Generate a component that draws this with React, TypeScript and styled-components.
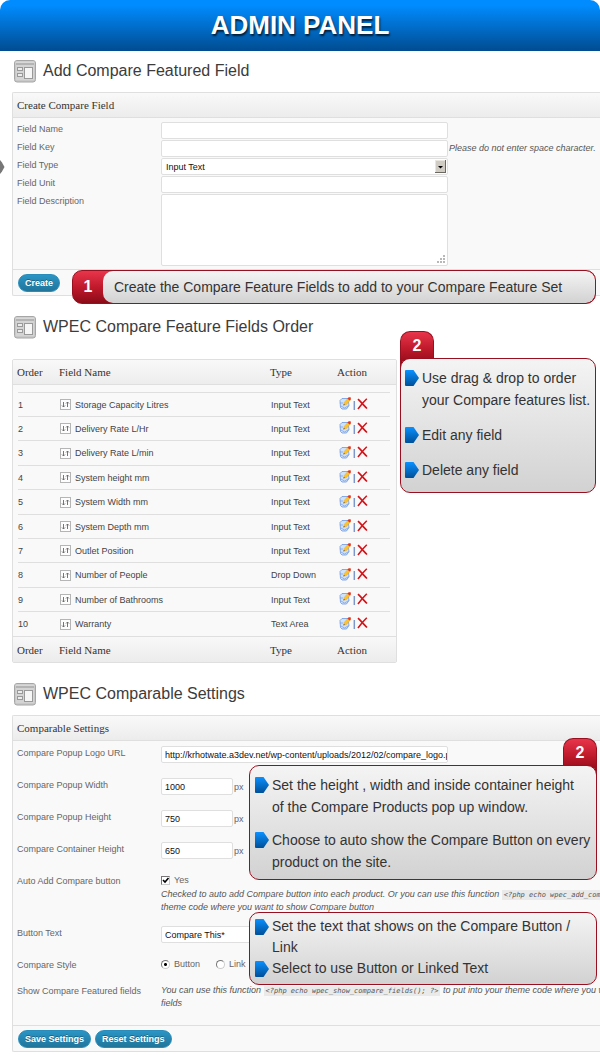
import React from "react";
import styled, { createGlobalStyle } from "styled-components";

const GlobalStyle = createGlobalStyle`
  *, *::before, *::after { box-sizing: border-box; }
  body {
    margin: 0;
    background: #fff;
    color: #333;
    font: 9px/12px "Liberation Sans", Arial, sans-serif;
    overflow-x: hidden;
  }
`;

const Banner = styled.header`
  display: flex;
  align-items: center;
  justify-content: center;
  height: 51px;
  padding-bottom: 2px;
  border-radius: 10px 10px 0 0;
  background: linear-gradient(#008cff 10%, #004c90);
`;

const BannerTitle = styled.h1`
  margin: 0;
  color: #fff;
  font-size: 26px;
  line-height: 30px;
  text-shadow: 1px 2px 2px rgba(0, 0, 0, 0.7);
`;

const Section = styled.section<{ $gap?: number }>`
  position: relative;
  padding: ${(p) => p.$gap ?? 9}px 0 0 12px;
`;

const SectionHead = styled.div<{ $space: number }>`
  display: flex;
  gap: 7px;
  padding-left: 2px;
  margin-bottom: ${(p) => p.$space}px;
`;

const SectionTitle = styled.h2`
  margin: 0;
  color: #3c3c3c;
  font-size: 16px;
  font-weight: normal;
  line-height: 21px;
`;

const Panel = styled.div`
  border: 1px solid #dfdfdf;
  border-right: 0;
  border-radius: 2px 0 0 2px;
  background: #f9f9f9;
  overflow: hidden;
`;

const PanelHead = styled.h3`
  margin: 0;
  padding: 0 4px;
  height: 25px;
  border-bottom: 1px solid #dfdfdf;
  background: linear-gradient(#f9f9f9, #ececec);
  font: 11px/24px "Liberation Serif", "Times New Roman", serif;
`;

const PanelFoot = styled.div`
  display: flex;
  gap: 4px;
  padding: 4px 5px 3px;
  border-top: 1px solid #dfdfdf;
`;

const Fields = styled.div<{ $pad: string }>`
  padding: ${(p) => p.$pad};
`;

const Row = styled.div<{ $height: number }>`
  display: grid;
  grid-template-columns: 144px minmax(0, 1fr);
  align-items: start;
  min-height: ${(p) => p.$height}px;
  color: #666;
`;

const Caption = styled.label`
  padding-top: 1px;
`;

const Control = styled.div`
  display: flex;
  align-items: center;
  gap: 1px;
`;

const Options = styled.div`
  display: flex;
  gap: 16px;
`;

const fieldLook = `
  flex: none;
  border: 1px solid #dfdfdf;
  border-radius: 2px;
  background: #fff;
  color: #111;
  font: 9px/12px "Liberation Sans", Arial, sans-serif;
  outline: none;
`;

const TextInput = styled.input<{ $short?: boolean }>`
  ${fieldLook}
  width: ${(p) => (p.$short ? 72 : 287)}px;
  height: 17px;
  padding: 1px 0 0 3px;
`;

const Area = styled.textarea`
  ${fieldLook}
  display: block;
  width: 287px;
  height: 72px;
  padding: 3px;
  resize: none;
`;

const Overlaid = styled.span`
  position: relative;
  display: inline-flex;
  justify-self: start;
`;

const Corner = styled.svg`
  position: absolute;
  right: 2px;
  bottom: 2px;
  pointer-events: none;
`;

const Picker = styled.select`
  ${fieldLook}
  appearance: none;
  width: 287px;
  height: 17px;
  padding: 0 4px;
`;

const Choice = styled.label`
  display: inline-flex;
  align-items: center;
  gap: 4px;
  height: 12px;
`;

const Tick = styled.input`
  appearance: none;
  width: 9px;
  height: 9px;
  margin: 0;
  border: 1px solid #777;
  border-right-color: #ccc;
  border-bottom-color: #ccc;
  background: #fff;
`;

const TickMark = styled.svg`
  position: absolute;
  inset: 0;
  pointer-events: none;
`;

const Radio = styled.input`
  appearance: none;
  width: 9px;
  height: 9px;
  margin: 0;
  border: 1px solid #777;
  border-right-color: #ccc;
  border-bottom-color: #ccc;
  border-radius: 50%;
  background: #fff;
  &:checked {
    background: radial-gradient(circle, #000 1px, #fff 2px);
  }
`;

const Note = styled.em`
  color: #555;
  line-height: 13px;
  white-space: nowrap;
`;

const NoteBlock = styled(Note)`
  display: block;
`;

const Code = styled.code`
  padding: 1px 2px;
  background: #eaeaea;
  font: italic 7px/9px "DejaVu Sans Mono", monospace;
`;

const PillButton = styled.button`
  height: 18px;
  padding: 0 6px;
  border: 1px solid #298cba;
  border-radius: 9px;
  background: linear-gradient(#2a95c5, #21759b);
  color: #fff;
  font: bold 9px/14px "Liberation Sans", Arial, sans-serif;
  text-shadow: 0 -1px 0 rgba(0, 0, 0, 0.3);
`;

const TablePanel = styled(Panel)`
  width: 385px;
  border-right: 1px solid #dfdfdf;
  border-radius: 2px;
`;

const FieldTable = styled.table`
  width: 100%;
  border-collapse: separate;
  border-spacing: 0;
  table-layout: fixed;
  color: #444;

  th {
    height: 25px;
    padding: 0 4px;
    color: #333;
    font: 11px/14px "Liberation Serif", "Times New Roman", serif;
    text-align: left;
  }
  td {
    padding: 1px 5px 0;
  }
  thead tr,
  tfoot tr {
    background: linear-gradient(#f9f9f9, #ececec);
  }
  thead th {
    border-bottom: 1px solid #dfdfdf;
  }
  tfoot th {
    height: 26px;
    border-top: 1px solid #dfdfdf;
  }
  tbody::before {
    content: "";
    display: table-row;
    height: 7px;
  }
  tbody tr {
    height: 24px;
    background: linear-gradient(#dfdfdf, #dfdfdf) 5px 0 / calc(100% - 11px) 1px no-repeat;
  }
  tbody tr:nth-child(5n + 3),
  tbody tr:nth-child(5n) {
    height: 25px;
  }
`;

const NameCell = styled.span`
  display: flex;
  align-items: center;
  gap: 4px;
`;

const Actions = styled.span`
  display: flex;
  align-items: center;
  gap: 2px;
  padding-left: 1px;
`;

const IconLink = styled.a`
  display: flex;
  padding-bottom: 2px;
`;

const Callout = styled.aside<{ $top: number; $left: number; $right: number }>`
  position: absolute;
  top: ${(p) => p.$top}px;
  left: ${(p) => p.$left}px;
  right: ${(p) => p.$right}px;
  color: #333;
  font-size: 14px;
`;

const StepStrip = styled.div`
  display: flex;
  height: 34px;
  border: 1px solid #98101f;
  border-radius: 10px;
  background: linear-gradient(#e8354b, #c01a2c 50%, #8c0b17);
  overflow: hidden;
`;

const StepNumber = styled.b`
  width: 30px;
  color: #fff;
  font-size: 16px;
  line-height: 31px;
  text-align: center;
`;

const StepText = styled.p`
  flex: 1;
  margin: 0;
  padding-left: 11px;
  border-radius: 10px 9px 9px 10px;
  background: linear-gradient(#f4f4f4, #d2d2d2);
  line-height: 32px;
  white-space: nowrap;
`;

const StepTab = styled.b<{ $end?: boolean }>`
  display: block;
  width: 34px;
  height: 42px;
  margin: 0 0 -15px ${(p) => (p.$end ? "auto" : "0")};
  border: 1px solid #98101f;
  border-bottom: 0;
  border-radius: 10px 10px 0 0;
  background: linear-gradient(#e8354b, #c01a2c 40%, #8c0b17 80%);
  color: #fff;
  font-size: 16px;
  line-height: 28px;
  text-align: center;
`;

const StepList = styled.ul<{ $gap: number; $line: number; $pad: string }>`
  position: relative;
  display: flex;
  flex-direction: column;
  gap: ${(p) => p.$gap}px;
  margin: 0;
  padding: ${(p) => p.$pad};
  border: 1px solid #98101f;
  border-radius: 10px;
  background: linear-gradient(#f4f4f4, #d2d2d2);
  line-height: ${(p) => p.$line}px;
  list-style: none;
`;

const StepItem = styled.li`
  display: flex;
  gap: 3px;
  white-space: nowrap;
  svg {
    flex: none;
    margin-top: 3px;
  }
`;

const EdgeMarker = styled.svg`
  position: absolute;
  top: 109px;
  left: 0;
`;

const Arrow = () => (
  <svg width="14" height="16" viewBox="0 0 14 16" aria-hidden="true">
    <defs>
      <linearGradient id="arrowFill" x1="0" y1="0" x2="0" y2="1">
        <stop offset="0" stopColor="#0a90ff" />
        <stop offset="1" stopColor="#004f98" />
      </linearGradient>
    </defs>
    <path d="M1 0H8.5L14 8L8.5 16H1Q0 16 0 15V1Q0 0 1 0Z" fill="url(#arrowFill)" />
  </svg>
);

const LayoutIcon = () => (
  <svg width="22" height="23" viewBox="0 0 22 23" aria-hidden="true">
    <rect x="0.5" y="0.5" width="21" height="21.5" rx="2.5" fill="#c9c9c9" stroke="#a6a6a6" />
    <rect x="1.500" y="1.500" width="19" height="2" fill="#d8d8d8" />
    <rect x="2" y="3" width="18" height="2" fill="#b4b4b4" />
    <rect x="2" y="5" width="18" height="15" fill="#d4d4d4" />
    <rect x="3.500" y="7.500" width="5" height="3" fill="#ececec" stroke="#999" />
    <rect x="3.500" y="13.500" width="5" height="3" fill="#ececec" stroke="#999" />
    <rect x="10.500" y="7.500" width="8" height="11" fill="#f6f6f6" stroke="#999" />
  </svg>
);

const SortIcon = () => (
  <svg width="11" height="11" viewBox="0 0 11 11" fill="none" aria-hidden="true">
    <rect x="0.5" y="0.5" width="10" height="10" fill="#fdfdfd" stroke="#b5b5b5" />
    <path d="M3.5 3V8M2 6.5L3.5 8L5 6.5M7.5 8V3M6 4.5L7.5 3L9 4.5" stroke="#666" strokeWidth="0.9" />
  </svg>
);

const EditIcon = () => (
  <svg width="12" height="13" viewBox="0 0 12 13" aria-hidden="true">
    <path d="M1 3.5L3 1.5H9L10 8.5L7.5 12H3L1.5 10.5Z" fill="#cfe2fb" stroke="#6f97dc" strokeWidth="0.8" />
    <path d="M0.8 6H4M2 9L5.5 11L10 8.5" stroke="#7da3e4" strokeWidth="0.8" fill="none" />
    <path d="M4.6 8.2L5.3 5.4L8.8 1.4L11.200 3.200L7.4 7.6Z" fill="#fcc42c" stroke="#e39a1c" strokeWidth="0.4" />
    <path d="M8.4 1.8L9.6 0.2H11.600L12 2.200L10.900 3.600Z" fill="#e03a26" />
    <path d="M4.4 8.4L4.9 6.9L5.9 7.8Z" fill="#444" />
  </svg>
);

const DeleteIcon = () => (
  <svg width="11" height="12" viewBox="0 0 11 12" fill="none" aria-hidden="true">
    <path d="M1 1.2C4 4 7 7.5 10 10.5" stroke="#d3161b" strokeWidth="1.7" />
    <path d="M9.8 0.8C6.5 4 3.5 7.5 1 11" stroke="#d3161b" strokeWidth="1.6" />
  </svg>
);

const DropArrow = () => (
  <Corner width="11" height="13" viewBox="0 0 11 13" aria-hidden="true">
    <rect width="11" height="13" fill="#6b6862" />
    <rect width="10" height="12" fill="#e9e6e0" />
    <rect x="1" y="1" width="9" height="11" fill="#d0ccc4" />
    <path d="M3 6H8L5.5 8.5Z" fill="#000" />
  </Corner>
);

const Grip = () => (
  <Corner width="9" height="9" viewBox="0 0 9 9" fill="#b8b8b8" aria-hidden="true">
    <path d="M6 0h2v2h-2zM6 3h2v2h-2zM3 3h2v2h-2zM6 6h2v2h-2zM3 6h2v2h-2zM0 6h2v2h-2z" />
  </Corner>
);

const features = [
  ["Storage Capacity Litres", "Input Text"],
  ["Delivery Rate L/Hr", "Input Text"],
  ["Delivery Rate L/min", "Input Text"],
  ["System height mm", "Input Text"],
  ["System Width mm", "Input Text"],
  ["System Depth mm", "Input Text"],
  ["Outlet Position", "Input Text"],
  ["Number of People", "Drop Down"],
  ["Number of Bathrooms", "Input Text"],
  ["Warranty", "Text Area"],
];

const sizes = [
  ["Compare Popup Width", "1000"],
  ["Compare Popup Height", "750"],
  ["Compare Container Height", "650"],
];

const ColumnNames = () => (
  <tr>
    <th scope="col">Order</th>
    <th scope="col">Field Name</th>
    <th scope="col">Type</th>
    <th scope="col">Action</th>
  </tr>
);

const Heading = ({ space, children }: { space: number; children: React.ReactNode }) => (
  <SectionHead $space={space}>
    <LayoutIcon />
    <SectionTitle>{children}</SectionTitle>
  </SectionHead>
);

export default function App() {
  return (
    <>
      <GlobalStyle />
      <Banner>
        <BannerTitle>ADMIN PANEL</BannerTitle>
      </Banner>
      <main>
        <Section>
          <EdgeMarker width="5" height="14" viewBox="0 0 5 14" aria-hidden="true">
            <path d="M0 0L2 2.5L4.5 7L2 11.5L0 14Z" fill="#777" />
          </EdgeMarker>
          <Heading space={9}>Add Compare Featured Field</Heading>
          <Panel>
            <PanelHead>Create Compare Field</PanelHead>
            <Fields $pad="4px 4px 2px">
              <Row $height={18}>
                <Caption htmlFor="name">Field Name</Caption>
                <TextInput id="name" />
              </Row>
              <Row $height={18}>
                <Caption htmlFor="key">Field Key</Caption>
                <Control>
                  <TextInput id="key" />
                  <Note>Please do not enter space character.</Note>
                </Control>
              </Row>
              <Row $height={18}>
                <Caption htmlFor="type">Field Type</Caption>
                <Overlaid>
                  <Picker id="type">
                    <option>Input Text</option>
                  </Picker>
                  <DropArrow />
                </Overlaid>
              </Row>
              <Row $height={18}>
                <Caption htmlFor="unit">Field Unit</Caption>
                <TextInput id="unit" />
              </Row>
              <Row $height={73}>
                <Caption htmlFor="description">Field Description</Caption>
                <Overlaid>
                  <Area id="description" />
                  <Grip />
                </Overlaid>
              </Row>
            </Fields>
            <PanelFoot>
              <PillButton type="button">Create</PillButton>
            </PanelFoot>
          </Panel>
          <Callout $top={219} $left={72} $right={4}>
            <StepStrip>
              <StepNumber>1</StepNumber>
              <StepText>Create the Compare Feature Fields to add to your Compare Feature Set</StepText>
            </StepStrip>
          </Callout>
        </Section>

        <Section $gap={20}>
          <Heading space={20}>WPEC Compare Feature Fields Order</Heading>
          <TablePanel>
            <FieldTable>
              <colgroup>
                <col style={{ width: 42 }} />
                <col style={{ width: 211 }} />
                <col style={{ width: 67 }} />
                <col />
              </colgroup>
              <thead>
                <ColumnNames />
              </thead>
              <tbody>
                {features.map(([name, type], i) => (
                  <tr key={name}>
                    <td>{i + 1}</td>
                    <td>
                      <NameCell>
                        <SortIcon />
                        {name}
                      </NameCell>
                    </td>
                    <td>{type}</td>
                    <td>
                      <Actions>
                        <IconLink href="#edit" aria-label={`Edit ${name}`}>
                          <EditIcon />
                        </IconLink>
                        <span>|</span>
                        <IconLink href="#delete" aria-label={`Delete ${name}`}>
                          <DeleteIcon />
                        </IconLink>
                      </Actions>
                    </td>
                  </tr>
                ))}
              </tbody>
              <tfoot>
                <ColumnNames />
              </tfoot>
            </FieldTable>
          </TablePanel>
          <Callout $top={35} $left={400} $right={4}>
            <StepTab>2</StepTab>
            <StepList $gap={13} $line={22} $pad="8px 4px 11px">
              <StepItem>
                <Arrow />
                <span>
                  Use drag &amp; drop to order
                  <br />
                  your Compare features list.
                </span>
              </StepItem>
              <StepItem>
                <Arrow />
                Edit any field
              </StepItem>
              <StepItem>
                <Arrow />
                Delete any field
              </StepItem>
            </StepList>
          </Callout>
        </Section>

        <Section $gap={20}>
          <Heading space={9}>WPEC Comparable Settings</Heading>
          <Panel>
            <PanelHead>Comparable Settings</PanelHead>
            <Fields $pad="5px 4px 15px">
              <Row $height={32}>
                <Caption htmlFor="logo">Compare Popup Logo URL</Caption>
                <TextInput
                  id="logo"
                  defaultValue="http://krhotwate.a3dev.net/wp-content/uploads/2012/02/compare_logo.p"
                />
              </Row>
              {sizes.map(([label, value]) => (
                <Row $height={32} key={label}>
                  <Caption htmlFor={label}>{label}</Caption>
                  <Control>
                    <TextInput $short id={label} defaultValue={value} />
                    px
                  </Control>
                </Row>
              ))}
              <Row $height={52}>
                <Caption htmlFor="auto">Auto Add Compare button</Caption>
                <div>
                  <Choice>
                    <Overlaid>
                      <Tick id="auto" type="checkbox" defaultChecked />
                      <TickMark width="9" height="9" viewBox="0 0 9 9" fill="none" aria-hidden="true">
                        <path d="M2 4L4 6L7.5 2" stroke="#000" strokeWidth="1.6" />
                      </TickMark>
                    </Overlaid>
                    Yes
                  </Choice>
                  <NoteBlock>
                    Checked to auto add Compare button into each product. Or you can use this function{" "}
                    <Code>&lt;?php echo wpec_add_compa</Code>
                    <br />
                    theme code where you want to show Compare button
                  </NoteBlock>
                </div>
              </Row>
              <Row $height={32}>
                <Caption htmlFor="text">Button Text</Caption>
                <TextInput id="text" defaultValue="Compare This*" />
              </Row>
              <Row $height={26}>
                <Caption as="span">Compare Style</Caption>
                <Options role="radiogroup" aria-label="Compare Style">
                  <Choice>
                    <Radio type="radio" name="style" defaultChecked />
                    Button
                  </Choice>
                  <Choice>
                    <Radio type="radio" name="style" />
                    Link
                  </Choice>
                </Options>
              </Row>
              <Row $height={26}>
                <Caption as="span">Show Compare Featured fields</Caption>
                <NoteBlock>
                  You can use this function <Code>&lt;?php echo wpec_show_compare_fields(); ?&gt;</Code> to put into your
                  theme code where you w
                  <br />
                  fields
                </NoteBlock>
              </Row>
            </Fields>
            <PanelFoot>
              <PillButton type="button">Save Settings</PillButton>
              <PillButton type="button">Reset Settings</PillButton>
            </PanelFoot>
          </Panel>
          <Callout $top={75} $left={249} $right={3}>
            <StepTab $end>2</StepTab>
            <StepList $gap={11} $line={22} $pad="8px 4px 6px 5px">
              <StepItem>
                <Arrow />
                <span>
                  Set the height , width and inside container height
                  <br />
                  of the Compare Products pop up window.
                </span>
              </StepItem>
              <StepItem>
                <Arrow />
                <span>
                  Choose to auto show the Compare Button on every
                  <br />
                  product on the site.
                </span>
              </StepItem>
            </StepList>
          </Callout>
          <Callout $top={249} $left={249} $right={3}>
            <StepList $gap={0} $line={21} $pad="3px 4px 5px 5px">
              <StepItem>
                <Arrow />
                <span>
                  Set the text that shows on the Compare Button /
                  <br />
                  Link
                </span>
              </StepItem>
              <StepItem>
                <Arrow />
                Select to use Button or Linked Text
              </StepItem>
            </StepList>
          </Callout>
        </Section>
      </main>
    </>
  );
}
